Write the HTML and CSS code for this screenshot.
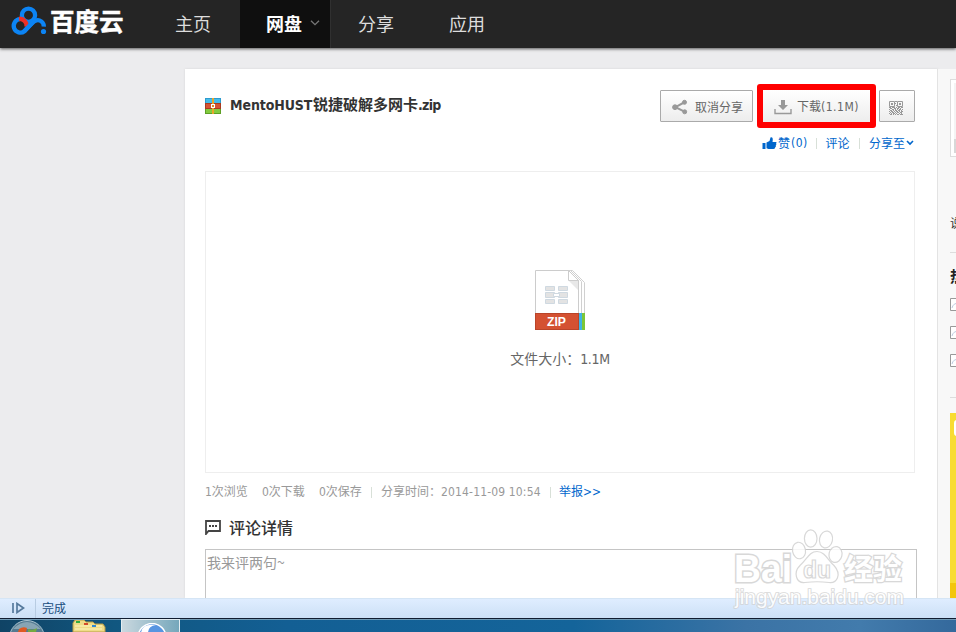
FILE: index.html
```
<!DOCTYPE html>
<html lang="zh-CN">
<head>
<meta charset="utf-8">
<title>百度云 网盘</title>
<link rel="stylesheet" href="styles.css">
</head>
<body>
<header class="topbar">
  <a class="brand">
    <svg width="37" height="30" viewBox="0 0 37 30" fill="none" stroke-width="4.300">
      <circle cx="18.500" cy="9.200" r="6.600" stroke="#0c84f4"/>
      <path d="M10 13.200a6.700 6.700 0 1 0 4.500 12c3-3 8-9 11-10.500a6 6 0 0 1 8.300 6" stroke="#0c84f4"/>
      <path d="M9 12.800a7 7 0 0 1 7.500 8" stroke="#ed3026"/>
      <path d="M14 25.500l9-9.500" stroke="#0c84f4"/>
      <circle cx="33.500" cy="25.500" r="2.600" fill="#0c84f4"/>
    </svg>
    <span class="brand-name">百度云</span>
  </a>
  <nav class="nav">
    <a class="nav-item home">主页</a>
    <a class="nav-item active">网盘<svg class="nav-arrow" width="10" height="6" viewBox="0 0 10 6"><path d="M1 .7l4 4 4-4" fill="none" stroke="#777" stroke-width="1.300"/></svg></a>
    <a class="nav-item share">分享</a>
    <a class="nav-item apps">应用</a>
  </nav>
</header>

<main class="page">
  <section class="content">
    <div class="file-head">
      <svg class="archive" width="16" height="16" viewBox="0 0 16 16">
        <path fill="#2e9bce" d="M0 0h16v5H0z"/><path fill="#47bce8" d="M1 1h14v4H1z"/>
        <path fill="#a93b20" d="M0 5h16v6H0z"/><path fill="#d65334" d="M1 6h14v4H1z"/>
        <path fill="#5d9f25" d="M0 11h16v5H0z"/><path fill="#82cb3f" d="M1 11h14v4H1z"/>
        <path fill="#e7a52b" d="M7 0h2v16H7z"/><path fill="#fff" d="M6 6h4v4H6z"/>
        <path fill="#d98c26" d="M7 7h2v2H7z"/>
      </svg>
      <h1 class="file-name"><span class="fn-latin">MentoHUST</span>锐捷破解多网卡<span class="fn-ext">.zip</span></h1>
      <div class="actions">
        <a class="btn cancel">
          <svg width="16" height="16" viewBox="0 0 16 16" fill="#999" stroke="#999"><path d="M12 3.500L3.500 8.200l9 4.400" fill="none" stroke-width="2"/><circle cx="12.500" cy="3.300" r="2"/><circle cx="3" cy="8.200" r="2.400"/><circle cx="12.700" cy="12.800" r="2"/></svg>
          <span>取消分享</span>
        </a>
        <a class="btn download">
          <svg width="18" height="16" viewBox="0 0 18 16"><path fill="#999" d="M7 1h4v5h3l-5 5-5-5h3z"/><path fill="none" stroke="#999" stroke-width="1.400" d="M1 10v4.500h16V10"/></svg>
          <span>下载<span class="dl-size">(1.1M)</span></span>
        </a>
        <a class="btn qr">
          <svg width="14" height="14" viewBox="0 0 14 14" fill="none" stroke="#999"><path d="M.5.500h5v5h-5zM8.500.500h5v5h-5z"/><path d="M2 2.500h2M2 3.500h2M10 2.500h2M10 3.500h2M6 .500h2M6 2.500h1M7 4.500h1M0 6.500h2M3 6.500h3M7 6.500h1M9 6.500h2M12 6.500h2M1 7.500h2M5 7.500h2M8 7.500h2M11 7.500h1M0 8.500h1M3 8.500h2M6 8.500h1M8 8.500h1M10 8.500h2M13 8.500h1M1 9.500h2M4 9.500h1M6 9.500h2M9 9.500h2M12 9.500h1M0 10.500h1M2 10.500h2M5 10.500h1M7 10.500h2M10 10.500h1M12 10.500h2M1 11.500h1M3 11.500h2M6 11.500h1M8 11.500h2M11 11.500h2M0 12.500h1M2 12.500h1M4 12.500h2M7 12.500h1M10 12.500h1M12 12.500h1M1 13.500h2M4 13.500h1M6 13.500h1M8 13.500h2M11 13.500h3"/></svg>
        </a>
      </div>
    </div>
    <div class="social">
      <a class="like"><svg width="15" height="13" viewBox="0 0 14 13" fill="#06c"><path d="M0 6h3v6H0zM4 5.500L7 4l1-3.500c2-.7 2.700 1 2 4.500h3.500c.7 0 .7 1.500 0 1.800.6.6.3 1.500-.3 1.700.4.700.1 1.500-.6 1.700.2 1-.3 1.800-1.600 1.800H6l-2-.8z"/></svg>赞<span class="like-n">(0)</span></a>
      <i class="sep"></i>
      <a class="comment">评论</a>
      <i class="sep"></i>
      <a class="share-to">分享至<svg width="8" height="6" viewBox="0 0 8 6"><path d="M1 1l3 3 3-3" fill="none" stroke="#06c" stroke-width="1.600"/></svg></a>
    </div>
    <div class="preview">
      <svg width="50" height="60" viewBox="0 0 50 60">
        <path d="M6.500.500h31l12 12V60h-43z" fill="#fff" stroke="#d0d0d0"/>
        <path d="M3.500.500h32l11 11V60h-43z" fill="#fff" stroke="#d0d0d0"/>
        <path d="M.5.500h33l10 10V60H.5z" fill="#fff" stroke="#ccc"/>
        <path d="M34 11h9v9z" fill="#e8e8e8"/>
        <path d="M33.500.500v10h10z" fill="#fff" stroke="#ccc"/>
        <g fill="#e3e3e3" stroke="#cfd9e1"><path d="M10.500 16.500h9v4h-9zM23.500 16.500h9v4h-9zM10.500 22.500h9v5h-9zM23.500 22.500h9v5h-9zM10.500 29.500h9v4h-9zM23.500 29.500h9v4h-9z"/><path fill="#fff" d="M18.500 23.500h6v3h-6z"/></g>
        <path fill="#7dc637" d="M47 43h3v17h-3z"/><path fill="#3fb2e5" d="M44 43h3v17h-3z"/>
        <path fill="#b94429" d="M0 43h44v17H0z"/><path fill="#d45132" d="M1 44h42v15H1z"/>
        <text class="zip-text" x="12" y="55.500" textLength="19" lengthAdjust="spacingAndGlyphs">ZIP</text>
      </svg>
      <p class="file-size">文件大小：<span>1.1M</span></p>
    </div>
    <div class="stats">
      <span class="views">1次浏览</span><span class="downs">0次下载</span><span class="saves">0次保存</span>
      <i class="sep"></i>
      <span class="time">分享时间：<span class="date">2014-11-09 10:54</span></span>
      <i class="sep"></i>
      <a class="report">举报&gt;&gt;</a>
    </div>
    <h2 class="comments-title">
      <svg width="16" height="15" viewBox="0 0 16 15"><path d="M1 14V1h14v10H3.500z" fill="none" stroke="#444" stroke-width="1.800"/><path d="M4 5h2v2H4zM7 5h2v2H7zM10 5h2v2h-2z" fill="#444"/></svg>
      <span>评论详情</span>
    </h2>
    <div class="comment-box">我来评两句~</div>
  </section>

  <aside class="side">
    <div class="avatar"><div class="avatar-pic"></div></div>
    <p class="side-text">说</p>
    <h3 class="side-title">热</h3>
    <ul class="side-list">
      <li><svg width="12" height="13"><path d="M.5.500h14v12H.5z" fill="#fff" stroke="#999"/><path d="M2 10q1-5 7-5" fill="none" stroke="#bccbe0"/></svg></li>
      <li><svg width="12" height="13"><path d="M.5.500h14v12H.5z" fill="#fff" stroke="#999"/><path d="M2 10q1-5 7-5" fill="none" stroke="#bccbe0"/></svg></li>
      <li><svg width="12" height="13"><path d="M.5.500h14v12H.5z" fill="#fff" stroke="#999"/><path d="M2 10q1-5 7-5" fill="none" stroke="#bccbe0"/></svg></li>
    </ul>
    <div class="promo"><div class="promo-card"></div><div class="promo-foot"></div></div>
  </aside>
</main>

<div class="statusbar">
  <div class="status-toggle"><svg width="13" height="12" viewBox="0 0 13 12" fill="none" stroke="#55799c" stroke-width="1.700"><path d="M1 1v10M5 1.500v9l6.500-4.500z"/></svg></div>
  <span>完成</span>
</div>
<div class="taskbar">
  <svg class="start" width="36" height="12" viewBox="0 0 36 12">
    <circle cx="18" cy="18" r="17.500" fill="#547a91" stroke="#a9c3d0"/><path d="M4 9Q18-5 32 9z" fill="#87a4b4"/>
    <path d="M10 9q4-3 8-1l-1 4H9z" fill="#df5923"/><path d="M19 9q5 2 9-1l-1 4h-8z" fill="#73a941"/>
  </svg>
  <svg class="folder" width="34" height="12" viewBox="0 0 34 12"><path d="M1 12V3l2-3h9l2 2h7l2 2h8l2 3v5z" fill="#efdc87" stroke="#b69b46"/><path d="M3 6h27M3 9h27" stroke="#fff6c0"/><path fill="#34ab3e" d="M4 1h4v2H4z"/><path fill="#d34b2b" d="M12 3h4v2h-4z"/><path fill="#328ad2" d="M20 5h4v2h-4z"/></svg>
  <div class="task"><svg width="30" height="10" viewBox="0 0 30 10"><circle cx="15" cy="14.500" r="14" fill="#5795e1" stroke="#fff" stroke-width="1.500"/><path d="M4 10Q5 0 19 2q-8 1-8 8z" fill="#fff"/></svg></div>
</div>

<svg class="watermark" width="190" height="94" viewBox="0 0 190 94">
  <g fill="#fff" stroke="#d2d2d2" stroke-width="1.200">
    <ellipse cx="78.700" cy="18.500" rx="6.300" ry="8.700"/>
    <ellipse cx="94" cy="19.500" rx="6.500" ry="8.500" transform="rotate(12 94 19.500)"/>
    <ellipse cx="67" cy="30.500" rx="6.500" ry="8.300" transform="rotate(-10 67 30.500)"/>
    <ellipse cx="103.500" cy="34.500" rx="6.500" ry="8" transform="rotate(12 103.500 34.500)"/>
    <path d="M85 31.500c8 0 11 9 17 14 8 9 3 18-5 17-8-1-16-1-24 0-9 1-12-10-5-17 7-6 9-14 17-14z"/>
    <text class="wm-main" x="2" y="62" textLength="58" lengthAdjust="spacingAndGlyphs">Bai</text>
    <text class="wm-du" x="71" y="58" textLength="28" lengthAdjust="spacingAndGlyphs">du</text>
    <text class="wm-cn" x="112" y="59.500" textLength="58" lengthAdjust="spacingAndGlyphs">经验</text>
  </g>
  <text class="wm-url" x="3" y="84" textLength="169" lengthAdjust="spacingAndGlyphs">jingyan.baidu.com</text>
</svg>
</body>
</html>
```
FILE: styles.css
```
* { box-sizing: border-box; }
body {
  margin: 0;
  width: 956px;
  height: 632px;
  overflow: hidden;
  position: relative;
  display: flex;
  flex-direction: column;
  background: #ececee;
  color: #666;
  font: 12px/18px "Tahoma", "Noto Sans CJK SC", sans-serif;
}
h1, h2, h3, p, ul { margin: 0; padding: 0; list-style: none; }
svg { display: block; flex: none; }
i { font-style: normal; }
.topbar {
  flex: none;
  height: 48px;
  display: flex;
  background: #252525;
  box-shadow: 0 1px 3px #555;
  z-index: 1;
}
.brand { width: 149px; padding: 6px 0 0 10px; display: flex; gap: 3px; }
.brand-name { color: #fff; font-size: 24.5px; font-weight: 700; line-height: 30px; white-space: nowrap; -webkit-text-stroke: .5px #fff; }
.nav { display: flex; }
.nav-item { width: 91px; height: 48px; color: #ddd; font-size: 18px; line-height: 46px; padding-left: 27px; }
.nav-item.home { padding-left: 26px; }
.nav-item.active {
  display: flex;
  align-items: center;
  gap: 8px;
  color: #fff;
  font-weight: 700;
  background: #0f0f0f;
  border-right: 1px solid #303030;
  padding: 0 0 2px 26px;
}
.page { flex: 1; min-height: 0; display: flex; padding: 21px 0 0 185px; overflow: hidden; }
.content { width: 753px; flex: none; background: #fff; padding: 15px 20px 0; border-right: 1px solid #e3e3e3; box-shadow: 0 0 2px #d4d4d6; }
.file-head { display: flex; height: 44px; }
.archive { margin-top: 14px; }
.file-name { flex: none; margin: 10px 0 0 9px; width: 426px; color: #333; font-size: 15px; line-height: 20px; font-weight: 700; white-space: nowrap; }
.fn-latin, .fn-ext { display: inline-block; font-family: "DejaVu Sans Condensed", "DejaVu Sans", sans-serif; font-stretch: condensed; font-size: 14px; letter-spacing: -.1px; }
.fn-latin { width: 83px; }
.fn-ext { letter-spacing: -.75px; }
.actions { margin: 0 0 0 4px; display: flex; flex: none; align-items: flex-start; }
.btn { height: 32px; display: flex; align-items: center; border: 1px solid #aaa; border-radius: 1px; background: linear-gradient(#fff, #ededed); margin-top: 6px; white-space: nowrap; flex: none; }
.btn.cancel { width: 93px; padding: 2px 0 0 11px; gap: 7px; }
.btn.download { width: 119px; height: 44px; margin: 0 0 0 4px; padding: 1px 0 0 11px; gap: 5px; border: 6px solid red; border-radius: 3px; }
.dl-size { font-family: "DejaVu Sans Condensed", "DejaVu Sans", sans-serif; font-stretch: condensed; letter-spacing: .5px; }
.btn.qr { width: 36px; margin-left: 3px; padding: 3px 0 0 9px; }
.social { display: flex; align-items: center; height: 20px; margin: 5px 0 0 557px; color: #06c; width: 154px; white-space: nowrap; }
.like { display: flex; align-items: center; gap: 1px; width: 54px; }
.like-n { font-family: "DejaVu Sans Condensed", "DejaVu Sans", sans-serif; font-stretch: condensed; letter-spacing: .4px; }
.sep { width: 1px; height: 11px; background: #d8e0d8; flex: none; }
.comment { width: 42px; padding-left: 8.5px; }
.share-to { display: flex; align-items: center; gap: 1px; padding-left: 9px; }
.preview { width: 710px; height: 302px; margin-top: 18px; border: 1px solid #eee; display: flex; flex-direction: column; align-items: center; padding-top: 98px; }
.zip-text { font: 700 12px "Liberation Sans", sans-serif; fill: #fff; }
.file-size { margin-top: 17px; font-size: 14px; line-height: 22px; }
.file-size span { font-family: "DejaVu Sans Condensed", "DejaVu Sans", sans-serif; font-stretch: condensed; font-size: 14px; letter-spacing: -.3px; }
.stats { height: 20px; margin-top: 9px; display: flex; align-items: center; color: #999; white-space: nowrap; font-family: "DejaVu Sans Condensed", "Noto Sans CJK SC", sans-serif; font-stretch: condensed; }
.views, .downs { width: 57px; }
.saves { width: 52px; }
.time { width: 178px; padding-left: 9px; }
.date { letter-spacing: .15px; }
.report { color: #06c; padding-left: 8px; }
.comments-title { display: flex; align-items: center; gap: 8px; margin-top: 13px; height: 24px; color: #333; font-size: 16px; line-height: 24px; font-weight: 500; }
.comment-box { width: 712px; height: 80px; margin-top: 10px; border: 1px solid #c5c5c5; padding: 2px 1px; font-size: 14px; line-height: 21px; color: #999; }
.side { flex: 1; min-width: 0; background: #f8f8f8; padding: 10px 0 0 12px; overflow: hidden; }
.avatar { width: 80px; height: 78px; padding: 3px; background: #fff; border: 1px solid #ddd; }
.avatar-pic { height: 70px; background: linear-gradient(#f4f4f4 0 56px, #d8d8d8 56px); }
.side-text { height: 96px; padding-top: 57px; color: #333; border-bottom: 1px solid #ddd; }
.side-title { color: #222; font-size: 15px; line-height: 22px; padding-top: 12px; }
.side-list { height: 111px; padding-top: 11px; border-bottom: 1px solid #ddd; }
.side-list li { height: 28px; }
.promo { width: 80px; height: 200px; margin-top: 15px; padding: 7px 0 0 4px; background: #f8dc32; }
.promo-card { height: 16px; background: #fff; border-radius: 3px; }
.promo-foot { height: 50px; margin: 147px 0 0 -4px; background: #f3c60b; }
.statusbar { flex: none; height: 20px; display: flex; color: #184c7d; line-height: 18px; background: linear-gradient(#dfedff, #cce0f6); border-top: 1px solid #d5e5f5; z-index: 1; }
.status-toggle { width: 36px; border-right: 1px solid #b8cce2; padding: 3px 0 0 12px; margin-right: 6px; }
.taskbar { flex: none; height: 14px; display: flex; align-items: flex-end; border-top: 1px solid #101c30; box-shadow: inset 0 1px #729bb5; background: linear-gradient(90deg, #104365 0, #115780 12%, #135f94 30%, #14649a 60%, #3b73a5 78%, #427bac 90%, #34699c); z-index: 1; }
.start { margin-left: 9px; }
.folder { margin-left: 27px; }
.task { width: 59px; height: 13px; margin-left: 15px; padding: 3px 0 0 15px; border: 1px solid #e3edf2; border-bottom: 0; background: linear-gradient(90deg, #cad8df, #75a7bb); }
.watermark { position: absolute; left: 732px; top: 520px; z-index: 2; opacity: .85; }
.wm-main { font: 700 38px "Liberation Sans", sans-serif; paint-order: stroke; stroke-width: 3px; }
.wm-du { font: 700 24px "Liberation Sans", sans-serif; }
.wm-cn { font: 700 29px "Noto Sans CJK SC", sans-serif; paint-order: stroke; stroke-width: 2.5px; }
.wm-url { font: 19.5px "Liberation Sans", sans-serif; fill: #fff; stroke: #d2d2d2; stroke-width: 1.6px; paint-order: stroke; }
```
